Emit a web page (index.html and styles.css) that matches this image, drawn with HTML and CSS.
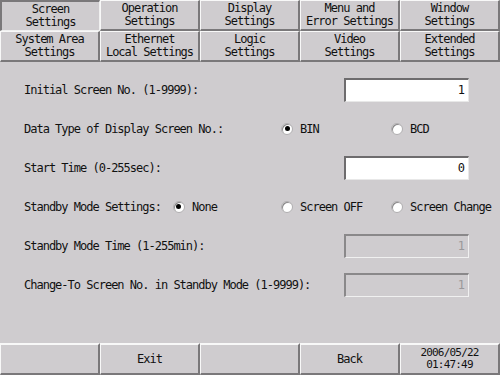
FILE: index.html
```html
<!DOCTYPE html>
<html>
<head>
<meta charset="utf-8">
<link rel="stylesheet" href="styles.css">
</head>
<body>
<div class="screen">
  <div class="tabs">
    <div class="tab selected">Screen<br>Settings</div>
    <div class="tab">Operation<br>Settings</div>
    <div class="tab">Display<br>Settings</div>
    <div class="tab">Menu and<br>Error Settings</div>
    <div class="tab">Window<br>Settings</div>
    <div class="tab">System Area<br>Settings</div>
    <div class="tab">Ethernet<br>Local Settings</div>
    <div class="tab">Logic<br>Settings</div>
    <div class="tab">Video<br>Settings</div>
    <div class="tab">Extended<br>Settings</div>
  </div>
  <div class="form">
    <div class="row">
      <span class="label">Initial Screen No. (1-9999):</span>
      <span class="input">1</span>
    </div>
    <div class="row">
      <span class="label">Data Type of Display Screen No.:</span>
      <span class="opt"><span class="radio on"></span>BIN</span>
      <span class="opt"><span class="radio"></span>BCD</span>
    </div>
    <div class="row">
      <span class="label">Start Time (0-255sec):</span>
      <span class="input">0</span>
    </div>
    <div class="row">
      <span class="label">Standby Mode Settings:<span class="opt inline"><span class="radio on"></span>None</span></span>
      <span class="opt"><span class="radio"></span>Screen OFF</span>
      <span class="opt"><span class="radio"></span>Screen Change</span>
    </div>
    <div class="row">
      <span class="label">Standby Mode Time (1-255min):</span>
      <span class="input disabled">1</span>
    </div>
    <div class="row">
      <span class="label">Change-To Screen No. in Standby Mode (1-9999):</span>
      <span class="input disabled">1</span>
    </div>
  </div>
  <div class="footer">
    <div class="btn"></div>
    <div class="btn">Exit</div>
    <div class="btn"></div>
    <div class="btn">Back</div>
    <div class="btn clock">2006/05/22<br>01:47:49</div>
  </div>
</div>
</body>
</html>
```
FILE: styles.css
```css
html, body {
  margin: 0;
  padding: 0;
}
body {
  background: #cfcccf;
  font-family: "DejaVu Sans Mono", "Liberation Mono", monospace;
  font-size: 12px;
  letter-spacing: -1px;
  color: #111;
}
.screen {
  width: 500px;
  height: 375px;
  display: flex;
  flex-direction: column;
  overflow: hidden;
}
.tabs {
  display: grid;
  grid-template-columns: repeat(5, 100px);
  grid-template-rows: 31px 31px;
}
.tab {
  box-sizing: border-box;
  border-style: solid;
  border-width: 1px 2px 2px 1px;
  border-color: #f8f8f8 #7a787a #7a787a #f8f8f8;
  text-align: center;
  line-height: 13px;
  padding-top: 1px;
  white-space: nowrap;
}
.tab.selected {
  border-width: 2px 1px 1px 2px;
  border-color: #7a787a #f0f0f0 #f0f0f0 #7a787a;
  padding-top: 1px;
}
.form {
  flex: 1;
  padding: 8px 0 0 24px;
  display: flex;
  flex-direction: column;
}
.row {
  height: 39px;
  display: grid;
  grid-template-columns: 257px 110px 109px;
  align-items: center;
}
.label {
  display: flex;
  align-items: center;
  white-space: nowrap;
}
.opt {
  display: flex;
  align-items: center;
  gap: 7px;
  white-space: nowrap;
}
.opt.inline {
  margin-left: 12px;
}
.radio {
  box-sizing: border-box;
  width: 12px;
  height: 12px;
  border-radius: 50%;
  background: #fff;
  border: 1px solid #b0aeb0;
  box-shadow: inset 1px 1px 0 #8a888a;
  display: flex;
  align-items: center;
  justify-content: center;
}
.radio.on::after {
  content: "";
  width: 5px;
  height: 5px;
  border-radius: 50%;
  background: #000;
}
.input {
  grid-column: 2 / 4;
  justify-self: start;
  margin-left: 63px;
  box-sizing: border-box;
  width: 125px;
  height: 24px;
  background: #fff;
  border-style: solid;
  border-width: 2px 1px 1px 2px;
  border-color: #6e6c6e #e8e8e8 #e8e8e8 #6e6c6e;
  text-align: right;
  padding-right: 4px;
  line-height: 20px;
}
.input.disabled {
  background: #cfcccf;
  color: #9a989a;
  border-color: #8a888a #f0f0f0 #f0f0f0 #8a888a;
}
.footer {
  display: grid;
  grid-template-columns: repeat(5, 100px);
  height: 32px;
}
.btn {
  box-sizing: border-box;
  border-style: solid;
  border-width: 2px 2px 2px 1px;
  border-color: #f8f8f8 #7a787a #7a787a #f8f8f8;
  display: flex;
  align-items: center;
  justify-content: center;
  text-align: center;
  line-height: 13px;
}
.clock {
  font-size: 11px;
  line-height: 12px;
  letter-spacing: -0.8px;
}
```
